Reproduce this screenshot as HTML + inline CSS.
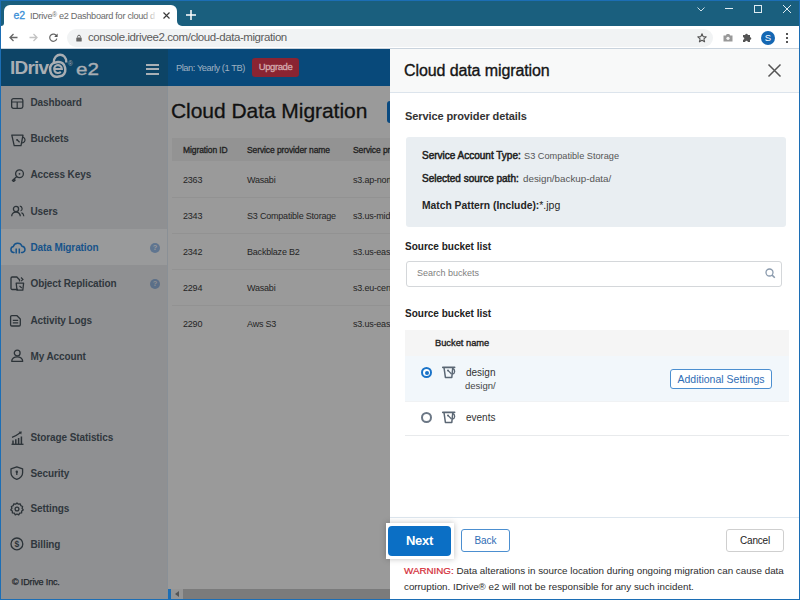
<!DOCTYPE html>
<html><head><meta charset="utf-8">
<style>
*{margin:0;padding:0;box-sizing:border-box}
html,body{width:800px;height:600px;overflow:hidden;background:#1c6eb5;font-family:"Liberation Sans",sans-serif}
.a{position:absolute;white-space:nowrap}
.t{position:absolute;white-space:nowrap;height:20px;line-height:20px}
.side{font-weight:bold;font-size:10px;color:#30373d;left:30.5px;letter-spacing:-0.1px}
.ic{position:absolute;left:10px;width:14px;height:14px}
.th{font-size:8.5px;color:#1e1e1e;letter-spacing:-0.1px;-webkit-text-stroke:0.3px #1e1e1e}
.td{font-size:9px;color:#252525;letter-spacing:-0.2px}
svg{position:absolute;overflow:visible}
</style></head><body>
<!-- tab strip -->
<div class="a" style="left:1px;top:20px;width:798px;height:29px;background:#fff"></div>
<div class="a" style="left:1px;top:1px;width:798px;height:12px;background:#1a5f7e"></div>
<div class="a" style="left:1px;top:1px;width:3px;height:25px;background:#1a5f7e;border-radius:0 0 4px 0"></div>
<div class="a" style="left:177px;top:1px;width:622px;height:25px;background:#1a5f7e;border-radius:0 0 0 5px"></div>
<div class="a" style="left:4px;top:5px;width:173px;height:22px;background:#fff;border-radius:6px 6px 0 0"></div>
<div class="t" style="left:13.5px;top:4.5px;font-size:10.5px;color:#3a8fd6;letter-spacing:-0.2px;-webkit-text-stroke:0.3px #3a8fd6">e2</div>
<div class="t" style="left:30px;top:4.5px;font-size:9.2px;color:#6a6a6a;letter-spacing:-0.3px;width:126px;overflow:hidden">IDrive<span style="font-size:6.5px;vertical-align:2px">®</span> e2 Dashboard for cloud d</div>
<div class="a" style="left:144px;top:5px;width:16px;height:20px;background:linear-gradient(90deg,rgba(255,255,255,0),#fff 85%)"></div>
<svg style="left:163px;top:12px" width="7" height="7"><path d="M0.5 0.5L6.5 6.5M6.5 0.5L0.5 6.5" stroke="#3a3a3a" stroke-width="1.15"/></svg>
<svg style="left:186px;top:10px" width="10" height="10"><path d="M5 0V10M0 5H10" stroke="#fff" stroke-width="1.5"/></svg>
<!-- window controls -->
<svg style="left:697px;top:7px" width="8" height="5"><path d="M0.5 0.5L4 4L7.5 0.5" stroke="#cfe0e8" stroke-width="1" fill="none"/></svg>
<div class="a" style="left:725px;top:8px;width:8px;height:1px;background:#e0ecf2"></div>
<div class="a" style="left:754px;top:5px;width:8px;height:8px;border:1px solid #e0ecf2"></div>
<svg style="left:783px;top:5px" width="8" height="8"><path d="M0 0L8 8M8 0L0 8" stroke="#e0ecf2" stroke-width="1"/></svg>
<!-- toolbar -->
<div class="a" style="left:1px;top:48px;width:798px;height:1px;background:#c9d3dd"></div>
<svg style="left:9px;top:32.5px" width="9" height="9"><path d="M8.5 4.5H1M4.5 1L1 4.5L4.5 8" stroke="#666" stroke-width="1.3" fill="none"/></svg>
<svg style="left:29px;top:32.5px" width="9" height="9"><path d="M0.5 4.5H8M4.5 1L8 4.5L4.5 8" stroke="#c4c4c4" stroke-width="1.3" fill="none"/></svg>
<svg style="left:49px;top:32.5px" width="9" height="9"><path d="M7.6 3.2A3.6 3.6 0 1 0 7.8 5.6" stroke="#666" stroke-width="1.2" fill="none"/><path d="M8.6 0.6V4H5.2Z" fill="#555"/></svg>
<div class="a" style="left:67px;top:29px;width:646px;height:18px;background:#f1f3f4;border-radius:9px"></div>
<svg style="left:76px;top:33.5px" width="6" height="8"><path d="M1.6 3.5V2.6A1.4 1.4 0 0 1 4.4 2.6V3.5" stroke="#666" stroke-width="1" fill="none"/><rect x="0.3" y="3.5" width="5.4" height="4" rx="0.6" fill="#666"/></svg>
<div class="t" style="left:88px;top:26.7px;font-size:11.5px;color:#5c5c5c;letter-spacing:-0.42px">console.idrivee2.com/cloud-data-migration</div>
<svg style="left:697px;top:33px" width="10" height="10"><path d="M5 0.8L6.2 3.6L9.2 3.8L6.9 5.8L7.6 8.8L5 7.2L2.4 8.8L3.1 5.8L0.8 3.8L3.8 3.6Z" stroke="#555" stroke-width="1.1" fill="none" stroke-linejoin="round"/></svg>
<svg style="left:723px;top:33px" width="10" height="9"><path d="M0.5 2.5H2.8L3.8 1H6.2L7.2 2.5H9.5V8.5H0.5Z" fill="#999"/><circle cx="5" cy="5.3" r="1.6" fill="#f4f4f4"/></svg>
<svg style="left:742px;top:32px" width="11" height="11"><path d="M1 3H3.2A1.3 1.3 0 0 1 5.8 3H8V5.2A1.3 1.3 0 0 1 8 7.8V10H5.8A1.3 1.3 0 0 0 3.2 10H1V7.8A1.3 1.3 0 0 0 1 5.2Z" fill="#555"/></svg>
<div class="a" style="left:761px;top:31px;width:14px;height:14px;border-radius:50%;background:#1467b3"></div>
<div class="t" style="left:761px;top:28px;width:14px;text-align:center;font-size:9.5px;color:#fff">S</div>
<div class="a" style="left:786px;top:33px;width:2px;height:2px;background:#555"></div>
<div class="a" style="left:786px;top:37px;width:2px;height:2px;background:#555"></div>
<div class="a" style="left:786px;top:41px;width:2px;height:2px;background:#555"></div>

<!-- app header -->
<div class="a" style="left:1px;top:49px;width:167px;height:37px;background:#0d4466"></div>
<div class="a" style="left:168px;top:49px;width:222px;height:37px;background:#08497a"></div>
<div class="t" style="left:10px;top:57px;font-size:19px;font-weight:bold;color:#a9aeb3;letter-spacing:-0.8px;height:22px;line-height:22px">IDriv</div>
<svg style="left:47px;top:52px" width="24" height="28"><path d="M6.8 10.5C6.5 0.2 19.8 0.2 19.3 10.5" stroke="#a9aeb3" stroke-width="2.4" fill="none"/><rect x="3.2" y="10.2" width="15" height="14.4" rx="6.2" stroke="#a9aeb3" stroke-width="2.5" fill="none" transform="rotate(-8 10.7 17.4)"/><path d="M7.1 17H14.9A3.9 3.9 0 1 0 13.8 19.8" stroke="#a9aeb3" stroke-width="2.1" fill="none"/></svg>
<div class="a" style="left:68px;top:59.5px;font-size:6.5px;color:#a9aeb3;line-height:8px">®</div>
<div class="t" style="left:76px;top:58px;font-size:16.5px;color:#a9aeb3;height:22px;line-height:22px;transform:scaleX(1.25);transform-origin:0 0;-webkit-text-stroke:0.35px #a9aeb3">e2</div>
<div class="a" style="left:146px;top:64px;width:13px;height:2px;background:#a9b0b5"></div>
<div class="a" style="left:146px;top:68px;width:13px;height:2px;background:#a9b0b5"></div>
<div class="a" style="left:146px;top:73px;width:13px;height:2px;background:#a9b0b5"></div>
<div class="t" style="left:176px;top:57.5px;font-size:9.3px;color:#9fb1c1;letter-spacing:-0.45px">Plan: Yearly (1 TB)</div>
<div class="a" style="left:252px;top:58px;width:47px;height:19px;background:#8a2432;border-radius:3px"></div>
<div class="t" style="left:252px;top:57px;width:47px;text-align:center;font-size:9.5px;color:#d4a9ad;letter-spacing:-0.4px;-webkit-text-stroke:0.3px #d4a9ad">Upgrade</div>

<!-- sidebar -->
<div class="a" style="left:1px;top:86px;width:167px;height:513px;background:#8f9092"></div>
<div class="a" style="left:167px;top:86px;width:1px;height:513px;background:#8a9096"></div>
<div class="a" style="left:1px;top:229px;width:166px;height:36px;background:#999a9b"></div>

<div class="t side" style="top:92.8px">Dashboard</div>
<div class="t side" style="top:129.3px">Buckets</div>
<div class="t side" style="top:165.3px">Access Keys</div>
<div class="t side" style="top:201.8px">Users</div>
<div class="t side" style="top:238.3px;color:#17538a">Data Migration</div>
<div class="t side" style="top:274.3px">Object Replication</div>
<div class="t side" style="top:310.8px">Activity Logs</div>
<div class="t side" style="top:346.8px">My Account</div>
<div class="t side" style="top:428.3px">Storage Statistics</div>
<div class="t side" style="top:463.8px">Security</div>
<div class="t side" style="top:499.3px">Settings</div>
<div class="t side" style="top:535.3px">Billing</div>
<div class="t" style="left:12px;top:571.5px;font-size:9px;color:#23282d;letter-spacing:-0.15px;-webkit-text-stroke:0.25px #23282d">© IDrive Inc.</div>
<!-- sidebar icons -->
<svg style="left:11px;top:98px" width="13" height="11"><rect x="0.65" y="0.65" width="11.2" height="9.7" rx="1.8" stroke="#2c3338" stroke-width="1.3" fill="none"/><path d="M0.6 4H11.9M6.2 4V10.3" stroke="#2c3338" stroke-width="1.2"/></svg>
<svg style="left:11px;top:134px" width="15" height="13"><path d="M0.8 1.2H12L10 11.6H3.2Z" stroke="#2c3338" stroke-width="1.3" fill="none" stroke-linejoin="round"/><path d="M11.5 3.2A2.8 2.8 0 1 1 10.2 8.6" stroke="#2c3338" stroke-width="1.2" fill="none"/><path d="M6 5.8L8.6 8.2" stroke="#2c3338" stroke-width="1.2"/><circle cx="6" cy="5.8" r="0.9" fill="#2c3338"/></svg>
<svg style="left:11px;top:169px" width="14" height="13"><circle cx="8.5" cy="4.8" r="3.9" stroke="#2c3338" stroke-width="1.3" fill="none"/><circle cx="8.5" cy="4.8" r="0.9" fill="#2c3338"/><path d="M5.8 7.6L1.4 11.5L2.6 12.4L3.8 11.4M3 10.3L4.6 11.6" stroke="#2c3338" stroke-width="1.3" fill="none" stroke-linejoin="round"/></svg>
<svg style="left:11px;top:205px" width="14" height="12"><circle cx="5" cy="4" r="2.6" stroke="#2c3338" stroke-width="1.3" fill="none"/><path d="M0.7 11.3A4.3 4.3 0 0 1 9.3 11.3" stroke="#2c3338" stroke-width="1.3" fill="none"/><path d="M8.8 1.2A2.5 2.5 0 0 1 9.6 6" stroke="#2c3338" stroke-width="1.2" fill="none"/><path d="M10.5 7.6A4 4 0 0 1 12.8 11.3" stroke="#2c3338" stroke-width="1.2" fill="none"/></svg>
<svg style="left:10px;top:242px" width="16" height="12"><path d="M4 10.5H3.5A3 3 0 0 1 3.3 4.6A4.6 4.6 0 0 1 12 4.2A3.2 3.2 0 0 1 12.5 10.5H11.5" stroke="#17538a" stroke-width="1.5" fill="none" stroke-linecap="round"/><path d="M6.2 6.5V11.5M9.3 6.5V11.5" stroke="#17538a" stroke-width="1.5"/></svg>
<svg style="left:10px;top:276px" width="16" height="16"><path d="M8 13.5H2.2A1.2 1.2 0 0 1 1 12.3V2.2A1.2 1.2 0 0 1 2.2 1H6.8L9.5 3.8V5.5" stroke="#2c3338" stroke-width="1.3" fill="none"/><path d="M11 1.5L13 3.5L11 5.2" stroke="#2c3338" stroke-width="1.1" fill="none"/><path d="M6.2 7.2H13.6L12.8 14.2H7Z" stroke="#2c3338" stroke-width="1.3" fill="none" stroke-linejoin="round"/><path d="M9.5 10L11.8 12" stroke="#2c3338" stroke-width="1.1"/></svg>
<svg style="left:10px;top:315px" width="12" height="12"><path d="M1.8 0.7H7L10.3 4V9.8A1.2 1.2 0 0 1 9.1 11H1.8A1.2 1.2 0 0 1 0.6 9.8V1.9A1.2 1.2 0 0 1 1.8 0.7Z" stroke="#2c3338" stroke-width="1.3" fill="none"/><path d="M2.8 5.4H8.2M2.8 7.9H8.2" stroke="#2c3338" stroke-width="1.2"/></svg>
<svg style="left:11px;top:349px" width="13" height="13"><circle cx="6.2" cy="4" r="2.9" stroke="#2c3338" stroke-width="1.3" fill="none"/><path d="M0.7 12.3A5.5 4.5 0 0 1 11.7 12.3Z" stroke="#2c3338" stroke-width="1.3" fill="none" stroke-linejoin="round"/></svg>
<svg style="left:11px;top:431px" width="13" height="14"><path d="M0.5 13.3H12.5" stroke="#2c3338" stroke-width="1.3"/><path d="M2 13V9.5M4.8 13V8.3M7.6 13V7M10.4 13V5.5" stroke="#2c3338" stroke-width="1.5"/><path d="M1 6.3Q5.5 4.8 9.6 1.6" stroke="#2c3338" stroke-width="1.3" fill="none"/><path d="M7.6 0.8L10.8 0.6L10.2 3.6Z" fill="#2c3338"/></svg>
<svg style="left:10px;top:466px" width="14" height="14"><path d="M6.8 0.8L12.6 2.8V6.8C12.6 10.2 10 12.3 6.8 13.4C3.6 12.3 1 10.2 1 6.8V2.8Z" stroke="#2c3338" stroke-width="1.3" fill="none" stroke-linejoin="round"/><circle cx="6.8" cy="5.8" r="1.2" fill="#2c3338"/><path d="M6.8 6V9" stroke="#2c3338" stroke-width="1.3"/></svg>
<svg style="left:10px;top:502px" width="14" height="14"><path d="M7 0.9L8.4 2.2L10.3 1.9L10.8 3.7L12.6 4.5L12.1 6.3L13.2 7.9L11.7 9L11.6 10.9L9.7 11.1L8.7 12.8L7 12L5.3 12.8L4.3 11.1L2.4 10.9L2.3 9L0.8 7.9L1.9 6.3L1.4 4.5L3.2 3.7L3.7 1.9L5.6 2.2Z" stroke="#2c3338" stroke-width="1.3" fill="none" stroke-linejoin="round"/><circle cx="7" cy="7" r="1.9" stroke="#2c3338" stroke-width="1.3" fill="none"/></svg>
<svg style="left:10px;top:537px" width="14" height="14"><circle cx="6.9" cy="6.9" r="5.9" stroke="#2c3338" stroke-width="1.3" fill="none"/><text x="6.9" y="10" text-anchor="middle" font-family="Liberation Sans" font-weight="bold" font-size="8.5" fill="#2c3338">$</text></svg>
<!-- help icons -->
<div class="a" style="left:150px;top:243px;width:10px;height:10px;border-radius:50%;background:#5f7590"></div>
<div class="t" style="left:150px;top:238px;width:10px;text-align:center;font-size:7.5px;font-weight:bold;color:#9a9b9c">?</div>
<div class="a" style="left:150px;top:279px;width:10px;height:10px;border-radius:50%;background:#5b6f88"></div>
<div class="t" style="left:150px;top:274px;width:10px;text-align:center;font-size:7.5px;font-weight:bold;color:#8f9092">?</div>

<!-- main -->
<div class="a" style="left:168px;top:86px;width:222px;height:503px;background:#9a9a9a"></div>
<div class="t" style="left:171px;top:98.6px;font-size:21px;color:#111;height:24px;line-height:24px;letter-spacing:-0.05px;-webkit-text-stroke:0.3px #111">Cloud Data Migration</div>
<div class="a" style="left:387px;top:101px;width:10px;height:22px;background:#0a4a80;border-radius:3px 0 0 3px"></div>
<div class="a" style="left:172px;top:138px;width:218px;height:23px;background:#939393"></div>
<div class="t th" style="left:183px;top:140px">Migration ID</div>
<div class="t th" style="left:247px;top:140px">Service provider name</div>
<div class="t th" style="left:353px;top:140px">Service provider</div>

<div class="a" style="left:172px;top:197px;width:218px;height:1px;background:#929292"></div>
<div class="a" style="left:172px;top:233px;width:218px;height:1px;background:#929292"></div>
<div class="a" style="left:172px;top:269px;width:218px;height:1px;background:#929292"></div>
<div class="a" style="left:172px;top:305px;width:218px;height:1px;background:#929292"></div>

<div class="t td" style="left:183px;top:170px">2363</div>
<div class="t td" style="left:247px;top:170px">Wasabi</div>
<div class="t td" style="left:353px;top:170px">s3.ap-northeast</div>
<div class="t td" style="left:183px;top:206px">2343</div>
<div class="t td" style="left:247px;top:206px">S3 Compatible Storage</div>
<div class="t td" style="left:353px;top:206px">s3.us-midwest</div>
<div class="t td" style="left:183px;top:242px">2342</div>
<div class="t td" style="left:247px;top:242px">Backblaze B2</div>
<div class="t td" style="left:353px;top:242px">s3.us-east</div>
<div class="t td" style="left:183px;top:278px">2294</div>
<div class="t td" style="left:247px;top:278px">Wasabi</div>
<div class="t td" style="left:353px;top:278px">s3.eu-central</div>
<div class="t td" style="left:183px;top:314px">2290</div>
<div class="t td" style="left:247px;top:314px">Aws S3</div>
<div class="t td" style="left:353px;top:314px">s3.us-east</div>
<!-- scrollbar -->
<div class="a" style="left:171px;top:589px;width:219px;height:10px;background:#7b7b7b"></div>
<div class="a" style="left:171px;top:589px;width:12px;height:10px;background:#959595"></div>
<svg style="left:175px;top:591px" width="4" height="6"><path d="M4 0V6L0 3Z" fill="#555"/></svg>

<!-- modal -->
<div class="a" style="left:390px;top:49px;width:409px;height:550px;background:#fff"></div>
<div class="a" style="left:390px;top:49px;width:409px;height:44px;background:#f8f9f9;border-bottom:1px solid #dce4ec"></div>
<div class="t" style="left:404px;top:61px;font-size:16px;color:#151515;letter-spacing:-0.1px;-webkit-text-stroke:0.35px #151515">Cloud data migration</div>
<svg style="left:768px;top:64px" width="13" height="13"><path d="M0.5 0.5L12.5 12.5M12.5 0.5L0.5 12.5" stroke="#555" stroke-width="1.5"/></svg>

<div class="t" style="left:405px;top:106px;font-size:11px;font-weight:bold;color:#333;letter-spacing:-0.1px">Service provider details</div>
<div class="a" style="left:406px;top:137px;width:380px;height:90px;background:#e9eef2;border-radius:3px"></div>
<div class="t" style="left:422px;top:146px;font-size:10px;color:#1e1e1e;-webkit-text-stroke:0.5px #1e1e1e">Service Account Type:</div>
<div class="t" style="left:524px;top:146px;font-size:9.2px;color:#555">S3 Compatible Storage</div>
<div class="t" style="left:422px;top:169px;font-size:10px;color:#1e1e1e;-webkit-text-stroke:0.5px #1e1e1e">Selected source path:</div>
<div class="t" style="left:523px;top:169px;font-size:9.8px;color:#555">design/backup-data/</div>
<div class="t" style="left:422px;top:195px;font-size:10.3px;font-weight:bold;color:#252525">Match Pattern (Include):<span style="font-weight:normal;font-size:10.5px">*.jpg</span></div>

<div class="t" style="left:405px;top:237px;font-size:10px;font-weight:bold;color:#222">Source bucket list</div>
<div class="a" style="left:406px;top:261px;width:376px;height:26px;border:1px solid #d4d7da;border-radius:3px;background:#fff"></div>
<div class="t" style="left:417px;top:263px;font-size:9px;color:#808080">Search buckets</div>
<svg style="left:765px;top:268px" width="11" height="11"><circle cx="4.5" cy="4.5" r="3.5" stroke="#8a9aad" stroke-width="1.3" fill="none"/><path d="M7.1 7.1L9.8 9.8" stroke="#8a9aad" stroke-width="1.5"/></svg>

<div class="t" style="left:405px;top:304px;font-size:10px;font-weight:bold;color:#222">Source bucket list</div>
<div class="a" style="left:405px;top:330px;width:384px;height:26px;background:#f5f5f5"></div>
<div class="t" style="left:435px;top:333px;font-size:9.3px;color:#222;-webkit-text-stroke:0.35px #222">Bucket name</div>
<div class="a" style="left:405px;top:356px;width:384px;height:45px;background:#f2f7fb"></div>
<div class="a" style="left:405px;top:401px;width:384px;height:1px;background:#f0f2f4"></div>
<div class="a" style="left:405px;top:435px;width:384px;height:1px;background:#e8eaec"></div>
<!-- radios -->
<div class="a" style="left:421px;top:367px;width:11px;height:11px;border-radius:50%;border:2px solid #1a73c8;background:#fff"></div>
<div class="a" style="left:424.5px;top:370.5px;width:4px;height:4px;border-radius:50%;background:#1a73c8"></div>
<div class="a" style="left:421px;top:412px;width:11px;height:11px;border-radius:50%;border:2px solid #6b7785;background:#fff"></div>
<!-- bucket icons -->
<svg style="left:442px;top:366px" width="16" height="13"><path d="M0.8 1.3H12.6" stroke="#5b6774" stroke-width="1.7" stroke-linecap="round"/><path d="M2 1.5L3.4 11.4H9.8L10.8 1.5" stroke="#5b6774" stroke-width="1.5" fill="none" stroke-linejoin="round"/><path d="M11 2.6A2.6 2.9 0 0 1 10.3 8.2" stroke="#5b6774" stroke-width="1.3" fill="none"/><path d="M6 4.4L9.5 8" stroke="#5b6774" stroke-width="1.3"/><circle cx="6" cy="4.4" r="1" fill="#5b6774"/></svg>
<svg style="left:442px;top:411px" width="16" height="13"><path d="M0.8 1.3H12.6" stroke="#5b6774" stroke-width="1.7" stroke-linecap="round"/><path d="M2 1.5L3.4 11.4H9.8L10.8 1.5" stroke="#5b6774" stroke-width="1.5" fill="none" stroke-linejoin="round"/><path d="M11 2.6A2.6 2.9 0 0 1 10.3 8.2" stroke="#5b6774" stroke-width="1.3" fill="none"/><path d="M6 4.4L9.5 8" stroke="#5b6774" stroke-width="1.3"/><circle cx="6" cy="4.4" r="1" fill="#5b6774"/></svg>
<div class="t" style="left:466px;top:362.5px;font-size:10px;color:#333">design</div>
<div class="t" style="left:465px;top:375.5px;font-size:9.5px;color:#444">design/</div>
<div class="t" style="left:466px;top:407.5px;font-size:10px;color:#333">events</div>
<div class="a" style="left:670px;top:369px;width:102px;height:20px;border:1px solid #4c8fd0;border-radius:3px;background:#fff"></div>
<div class="t" style="left:670px;top:369px;width:102px;text-align:center;font-size:10.5px;color:#2f6db5;line-height:20px">Additional Settings</div>

<!-- footer -->
<div class="a" style="left:390px;top:517px;width:409px;height:1px;background:#dde6ee"></div>
<div class="a" style="left:386px;top:523px;width:68px;height:36px;background:#fff;box-shadow:0 0 6px rgba(0,0,0,0.25)"></div>
<div class="a" style="left:388px;top:526px;width:63px;height:30px;background:#0b6fc5;border-radius:4px"></div>
<div class="t" style="left:388px;top:531px;width:63px;text-align:center;font-size:13px;font-weight:bold;color:#fff;letter-spacing:-0.3px">Next</div>
<div class="a" style="left:461px;top:529px;width:49px;height:23px;border:1px solid #4c8fd0;border-radius:3px;background:#fff"></div>
<div class="t" style="left:461px;top:531px;width:49px;text-align:center;font-size:10px;color:#2f6db5">Back</div>
<div class="a" style="left:726px;top:529px;width:58px;height:23px;border:1px solid #cfcfcf;border-radius:3px;background:#fff"></div>
<div class="t" style="left:726px;top:531px;width:58px;text-align:center;font-size:10px;color:#222;letter-spacing:-0.2px">Cancel</div>
<div class="t" style="left:404px;top:560.5px;font-size:9.8px;color:#2b2b2b"><span style="color:#d42a35;-webkit-text-stroke:0.2px #d42a35">WARNING:</span> Data alterations in source location during ongoing migration can cause data</div>
<div class="t" style="left:404px;top:576.5px;font-size:9.8px;color:#2b2b2b">corruption. IDrive® e2 will not be responsible for any such incident.</div>
</body></html>
